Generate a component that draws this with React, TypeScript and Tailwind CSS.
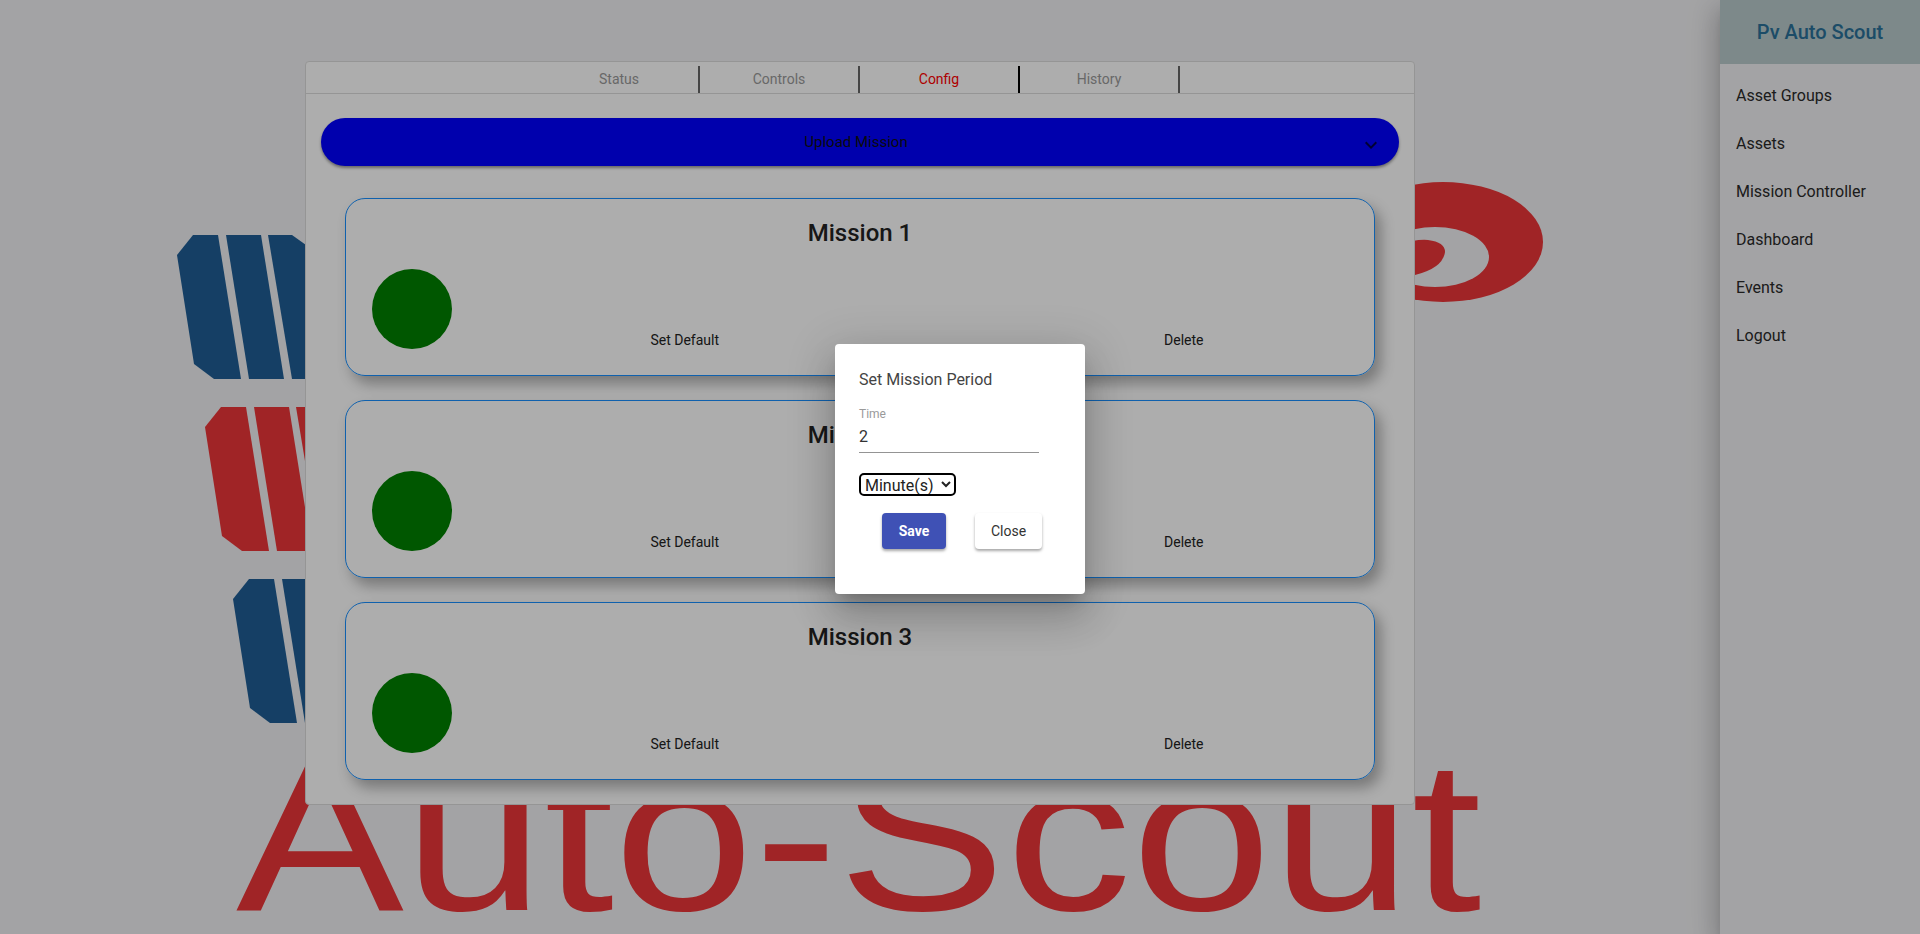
const tabs = ["Status", "Controls", "Config", "History"]
const navItems = ["Asset Groups", "Assets", "Mission Controller", "Dashboard", "Events", "Logout"]
const missions = ["Mission 1", "Mission 2", "Mission 3"]

// one row of the logo: three slanted solar panel stripes
function LogoRow({ x, y, fill }: { x: number; y: number; fill: string }) {
  return (
    <g transform={`translate(${x} ${y})`} fill={fill}>
      <polygon points="193,235 218,235 241,379 214,379 194,364 177,255" />
      <polygon points="226,235 261,235 284,379 249,379" />
      <polygon points="268,235 292,235 306,245 330,379 292,379" />
    </g>
  )
}

function Logo() {
  return (
    <svg className="absolute inset-0 h-[934px] w-[1920px]" viewBox="0 0 1920 934">
      <LogoRow x={0} y={0} fill="#1f5e96" />
      <LogoRow x={28} y={172} fill="#ec3538" />
      <LogoRow x={56} y={344} fill="#1f5e96" />
      <ellipse cx="1443" cy="242" rx="100" ry="60" fill="#ec3538" />
      <ellipse cx="1435" cy="257" rx="54" ry="30" fill="#f1f1f3" />
      <path d="M1400 245 Q1415 239 1428 240 Q1445 242 1445 252 Q1443 268 1415 275 L1400 278 Z" fill="#ec3538" />
      <text
        transform="translate(236 910) scale(1.171 1)"
        fontFamily="'Liberation Sans', Arial, sans-serif"
        fontSize="215"
        fill="#ec3538"
      >
        Auto-Scout
      </text>
    </svg>
  )
}

function MissionCard({ name }: { name: string }) {
  return (
    <div className="h-[178px] rounded-[20px] border border-[#1890ff] px-[26px] pt-[20px] shadow-[6px_8px_14px_rgba(0,0,0,0.3)]">
      <h2 className="text-center text-[24px] leading-[28px] font-medium text-[#222]">{name}</h2>
      <div className="mt-[22px] flex">
        <div className="h-[80px] w-[80px] rounded-full bg-[#008000]" />
        <div className="mt-[61px] ml-[108px] grid grid-cols-[249.5px_249.5px_249.5px] text-center text-[14px] leading-[20px] text-[#222]">
          <span>Set Default</span>
          <span />
          <span>Delete</span>
        </div>
      </div>
    </div>
  )
}

function PeriodDialog() {
  return (
    <div className="absolute inset-0 bg-black/32">
      <div className="mx-auto mt-[344px] h-[250px] w-[250px] rounded-[4px] bg-white p-6 shadow-[0_11px_15px_-7px_rgba(0,0,0,0.2),0_24px_38px_3px_rgba(0,0,0,0.14),0_9px_46px_8px_rgba(0,0,0,0.12)]">
        <h3 className="mt-[1px] text-[16px] leading-[22px] text-[#444]">Set Mission Period</h3>
        <div className="mt-[16px] w-[180px] border-b border-[#949494]">
          <label className="block text-[12px] leading-[14px] text-[#9a9a9a]">Time</label>
          <div className="mt-[4px] h-[27px] text-[16px] leading-[24px] text-[#333]">2</div>
        </div>
        <select
          defaultValue="min"
          className="mt-[22px] ml-[2px] block h-[19px] w-[93px] rounded-[3px] text-[16px] text-[#222] outline-2 outline-black"
        >
          <option value="min">Minute(s)</option>
          <option value="hr">Hour(s)</option>
        </select>
        <div className="mt-[19px] ml-[23px] flex items-center gap-[29px]">
          <button className="h-[36px] w-[64px] rounded-[4px] bg-[#3f51b5] text-[14px] font-bold text-white shadow-[0_2px_3px_rgba(0,0,0,0.35)]">
            Save
          </button>
          <button className="h-[36px] w-[67px] rounded-[4px] bg-white text-[14px] text-[#333] shadow-[0_2px_3px_rgba(0,0,0,0.35)]">
            Close
          </button>
        </div>
      </div>
    </div>
  )
}

export default function App() {
  return (
    <div className="relative flex h-[934px] w-[1920px] overflow-hidden bg-[#f1f1f3] font-['Roboto',sans-serif]">
      <Logo />

      <main className="relative w-[1720px]">
        <div className="mx-auto mt-[61px] w-[1110px] rounded-[4px] border border-[#dcdcdc] bg-white">
          <div className="flex h-[32px] justify-center border-b border-[#dcdcdc] pt-[4px]">
            {tabs.map((tab) => (
              <div
                key={tab}
                className={
                  "flex w-[160px] items-center justify-center border-r-2 text-[14px] " +
                  (tab === "Config" ? "border-black text-[#ff0000]" : "border-[#666] text-[#9a9a9a]")
                }
              >
                {tab}
              </div>
            ))}
          </div>

          <div className="px-[15px] pt-[24px] pb-[24px]">
            <div className="relative flex h-[48px] items-center justify-center rounded-[24px] bg-[#0000ff] pr-[8px] text-[15px] text-[#111] shadow-[0_2px_3px_rgba(0,0,0,0.4)]">
              Upload Mission
              <svg className="absolute top-[15px] right-[16px] h-[24px] w-[24px]" viewBox="0 0 24 24" fill="#000" fillOpacity="0.7">
                <path d="M16.59 8.59L12 13.17 7.41 8.59 6 10l6 6 6-6z" />
              </svg>
            </div>
            <div className="mt-[32px] flex flex-col gap-[24px] px-[24px]">
              {missions.map((m) => (
                <MissionCard key={m} name={m} />
              ))}
            </div>
          </div>
        </div>
      </main>

      <aside className="relative w-[200px] bg-[#f1f1f3] shadow-[0_8px_10px_-5px_rgba(0,0,0,0.2),0_16px_24px_2px_rgba(0,0,0,0.14),0_6px_30px_5px_rgba(0,0,0,0.12)]">
        <div className="flex h-[64px] items-center justify-center bg-[#b8cbcc] text-[20px] font-medium text-[#2a7099]">
          Pv Auto Scout
        </div>
        <nav className="pt-[8px]">
          {navItems.map((item) => (
            <div key={item} className="flex h-[48px] items-center pl-[16px] text-[16px] text-[#2a2a2a]">
              {item}
            </div>
          ))}
        </nav>
      </aside>

      <PeriodDialog />
    </div>
  )
}
